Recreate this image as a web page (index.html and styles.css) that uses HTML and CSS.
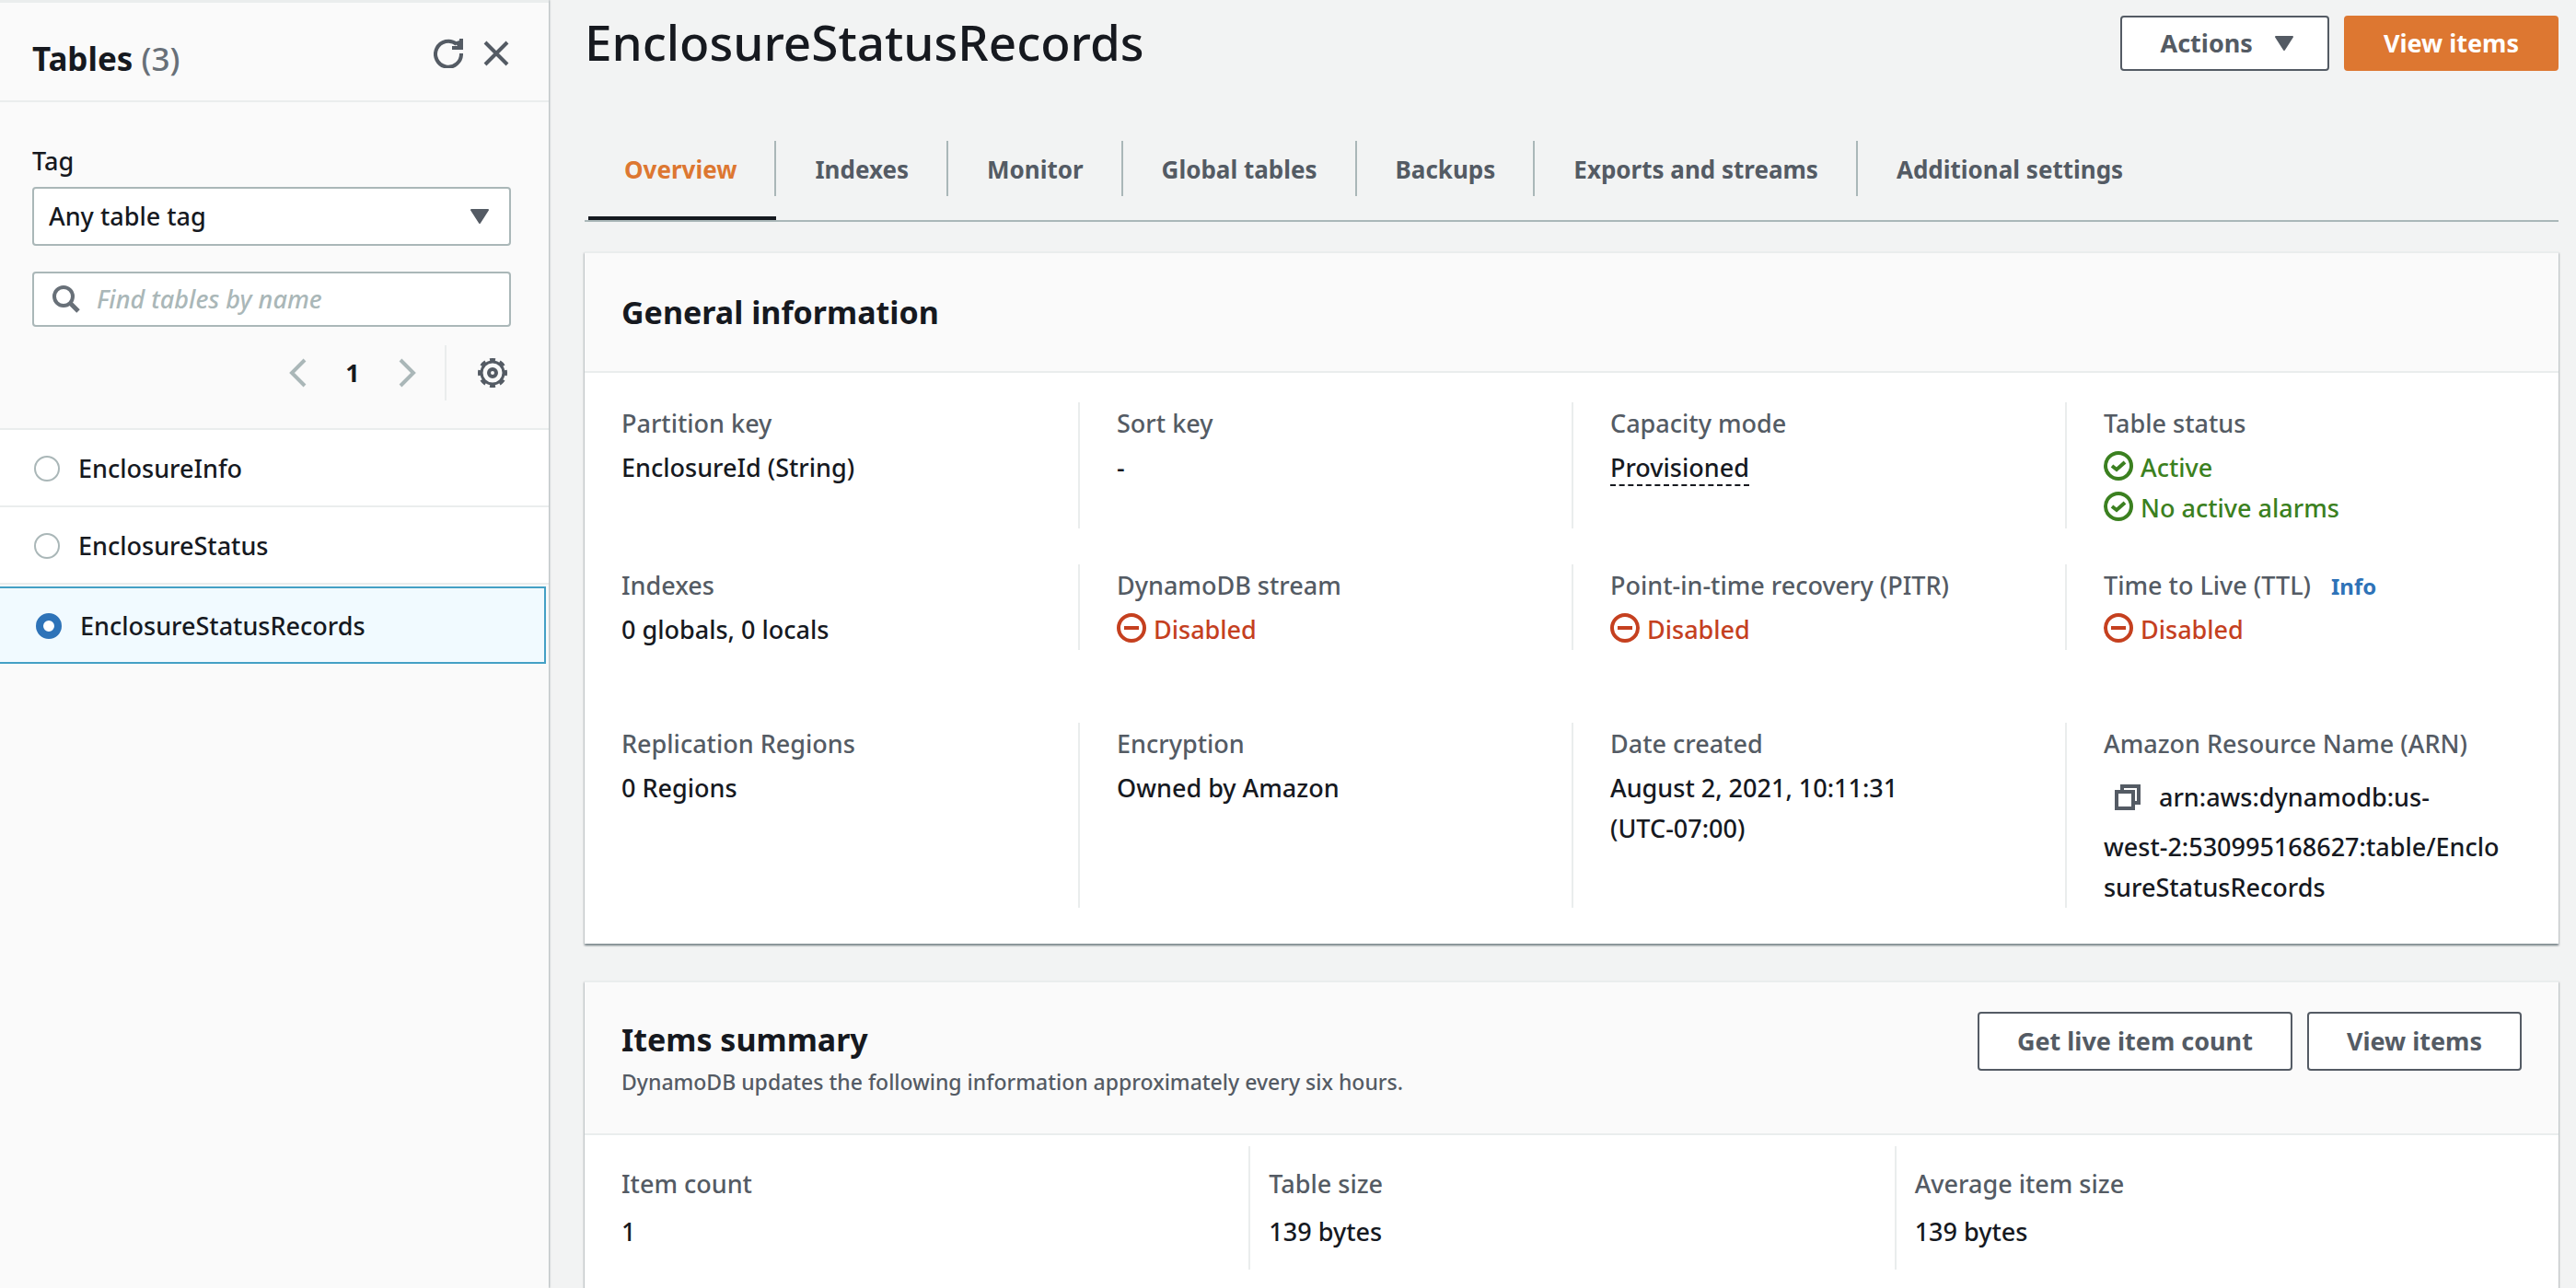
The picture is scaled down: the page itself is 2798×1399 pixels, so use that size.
FILE: index.html
```html
<!DOCTYPE html>
<html lang="en">
<head>
<meta charset="utf-8">
<meta name="viewport" content="width=device-width, initial-scale=1">
<title>EnclosureStatusRecords - DynamoDB</title>
<link rel="stylesheet" href="styles.css">
</head>
<body>
<svg class="sprite" aria-hidden="true">
  <symbol id="caret" viewBox="0 0 20 16"><path d="M1 1h18l-9 14z" fill="currentColor" stroke="currentColor" stroke-width="2" stroke-linejoin="round"/></symbol>
  <symbol id="ok" viewBox="0 0 32 32"><circle cx="16" cy="16" r="14" fill="none" stroke="currentColor" stroke-width="4"/><path d="M9 16l5 4 9-8" fill="none" stroke="currentColor" stroke-width="4"/></symbol>
  <symbol id="off" viewBox="0 0 32 32"><circle cx="16" cy="16" r="14" fill="none" stroke="currentColor" stroke-width="4"/><path d="M8 16h16" stroke="currentColor" stroke-width="4"/></symbol>
</svg>
<div class="layout">
  <aside class="sidebar">
    <header class="sidebar-head">
      <h2 class="sidebar-title">Tables <span class="count">(3)</span></h2>
      <div class="sidebar-tools">
        <button class="icon-btn" type="button" aria-label="Refresh"><svg width="32" height="32" viewBox="0 0 32 32"><path d="M30 16a14 14 0 1 1-5-10" fill="none" stroke="currentColor" stroke-width="4"/><path d="M30 0v10H20" fill="none" stroke="currentColor" stroke-width="4"/><path d="M22 4l6-2v8z" fill="currentColor"/></svg></button>
        <button class="icon-btn" type="button" aria-label="Close"><svg width="28" height="32" viewBox="0 0 28 32"><path d="M2 4l24 24M26 4L2 28" fill="none" stroke="currentColor" stroke-width="4"/></svg></button>
      </div>
    </header>
    <div class="filters">
      <label class="field-label" for="tag">Tag</label>
      <div class="select">
        <select id="tag" class="select-input"><option>Any table tag</option></select>
        <svg class="select-caret" width="20" height="16"><use href="#caret"/></svg>
      </div>
      <div class="search">
        <svg class="search-icon" width="32" height="32" viewBox="0 0 32 32"><circle cx="14" cy="13" r="10" fill="none" stroke="currentColor" stroke-width="4"/><path d="M21 20l9 9" stroke="currentColor" stroke-width="5"/></svg>
        <input class="search-input" type="text" aria-label="Find tables by name" placeholder="Find tables by name">
      </div>
      <div class="pager">
        <button class="page-btn" type="button" aria-label="Previous page"><svg width="20" height="32" viewBox="0 0 20 32"><path d="M18 2L4 16l14 14" fill="none" stroke="currentColor" stroke-width="4"/></svg></button>
        <span class="page-num">1</span>
        <button class="page-btn" type="button" aria-label="Next page"><svg width="20" height="32" viewBox="0 0 20 32"><path d="M2 2l14 14L2 30" fill="none" stroke="currentColor" stroke-width="4"/></svg></button>
        <button class="gear-btn" type="button" aria-label="Preferences"><svg width="32" height="32" viewBox="0 0 32 32" fill="none" stroke="currentColor" stroke-width="4"><circle cx="16" cy="16" r="12" stroke-width="3"/><circle cx="16" cy="16" r="14" pathLength="88" stroke-dasharray="6 5" stroke-dashoffset="3"/><circle cx="16" cy="16" r="4"/></svg></button>
      </div>
    </div>
    <div class="table-list">
      <label class="table-row"><input class="radio" type="radio" name="table">EnclosureInfo</label>
      <label class="table-row"><input class="radio" type="radio" name="table">EnclosureStatus</label>
      <label class="table-row selected"><input class="radio" type="radio" name="table" checked>EnclosureStatusRecords</label>
    </div>
  </aside>

  <main class="main">
    <header class="page-head">
      <h1 class="page-title">EnclosureStatusRecords</h1>
      <div class="actions">
        <button class="btn" type="button">Actions <svg class="btn-caret" width="20" height="16"><use href="#caret"/></svg></button>
        <button class="btn primary" type="button">View items</button>
      </div>
    </header>

    <nav class="tabs">
      <a class="tab active" href="#overview"><span class="tab-text">Overview</span></a>
      <a class="tab" href="#indexes"><span class="tab-text">Indexes</span></a>
      <a class="tab" href="#monitor"><span class="tab-text">Monitor</span></a>
      <a class="tab" href="#global"><span class="tab-text">Global tables</span></a>
      <a class="tab" href="#backups"><span class="tab-text">Backups</span></a>
      <a class="tab" href="#exports"><span class="tab-text">Exports and streams</span></a>
      <a class="tab" href="#settings"><span class="tab-text">Additional settings</span></a>
    </nav>

    <section class="card">
      <header class="card-head">
        <h2 class="card-title">General information</h2>
      </header>
      <div class="info">
        <dl class="info-row">
          <div class="info-cell"><dt>Partition key</dt><dd>EnclosureId (String)</dd></div>
          <div class="info-cell"><dt>Sort key</dt><dd>-</dd></div>
          <div class="info-cell"><dt>Capacity mode</dt><dd><span class="hint">Provisioned</span></dd></div>
          <div class="info-cell"><dt>Table status</dt>
            <dd class="status good"><svg class="status-icon"><use href="#ok"/></svg>Active</dd>
            <dd class="status good"><svg class="status-icon"><use href="#ok"/></svg>No active alarms</dd></div>
        </dl>
        <dl class="info-row">
          <div class="info-cell"><dt>Indexes</dt><dd>0 globals, 0 locals</dd></div>
          <div class="info-cell"><dt>DynamoDB stream</dt><dd class="status bad"><svg class="status-icon"><use href="#off"/></svg>Disabled</dd></div>
          <div class="info-cell"><dt>Point-in-time recovery (PITR)</dt><dd class="status bad"><svg class="status-icon"><use href="#off"/></svg>Disabled</dd></div>
          <div class="info-cell"><dt>Time to Live (TTL)<a class="info-link" href="#ttl">Info</a></dt><dd class="status bad"><svg class="status-icon"><use href="#off"/></svg>Disabled</dd></div>
        </dl>
        <dl class="info-row last">
          <div class="info-cell"><dt>Replication Regions</dt><dd>0 Regions</dd></div>
          <div class="info-cell"><dt>Encryption</dt><dd>Owned by Amazon</dd></div>
          <div class="info-cell"><dt>Date created</dt><dd>August 2, 2021, 10:11:31<br>(UTC-07:00)</dd></div>
          <div class="info-cell"><dt>Amazon Resource Name (ARN)</dt><dd><button class="copy-btn" type="button" aria-label="Copy ARN"><svg width="28" height="28" viewBox="0 0 28 28" fill="none" stroke="currentColor" stroke-width="4"><path d="M2 8h18v18H2z"/><path d="M8 8V2h18v18h-6"/></svg></button>arn:aws:dynamodb:us-<br>west-2:530995168627:table/Enclo<br>sureStatusRecords</dd></div>
        </dl>
      </div>
    </section>

    <section class="card">
      <header class="card-head">
        <div class="card-heading">
          <h2 class="card-title">Items summary</h2>
          <p class="card-desc">DynamoDB updates the following information approximately every six hours.</p>
        </div>
        <div class="actions">
          <button class="btn" type="button">Get live item count</button>
          <button class="btn" type="button">View items</button>
        </div>
      </header>
      <dl class="summary">
        <div class="summary-cell"><dt>Item count</dt><dd>1</dd></div>
        <div class="summary-cell"><dt>Table size</dt><dd>139 bytes</dd></div>
        <div class="summary-cell"><dt>Average item size</dt><dd>139 bytes</dd></div>
      </dl>
    </section>
  </main>
</div>
</body>
</html>
```
FILE: styles.css
```css
:root {
  --ink: #16191f;
  --muted: #545b64;
  --faint: #aab7b8;
  --line: #eaeded;
  --orange: #dd7731;
  --blue: #2e73b8;
}

*, *::before, *::after { box-sizing: border-box; }

body {
  margin: 0;
  background: #f2f3f3;
  color: var(--ink);
  font: 500 27px/44px "Noto Sans", "Open Sans", sans-serif;
}

h1, h2, p, dl, dt, dd { margin: 0; }

button, input, select { font: inherit; color: inherit; }

svg { display: block; }

.sprite { display: none; }

.layout {
  display: flex;
  height: 100vh;
  overflow: hidden;
}

/* Sidebar */
.sidebar {
  flex: 0 0 596px;
  border-top: 3px solid var(--line);
  background: #fafafa;
  box-shadow: 1px 0 2px rgba(0, 28, 36, .3);
}

.sidebar-head {
  display: flex;
  justify-content: space-between;
  height: 108px;
  padding: 35px 43px 0 35px;
  border-bottom: 2px solid var(--line);
}

.sidebar-title { font-size: 35px; line-height: 52px; }

.count { color: #687078; font-weight: 500; }

.sidebar-tools {
  display: flex;
  gap: 22px;
  align-items: flex-start;
  padding-top: 4px;
}

.icon-btn, .page-btn, .gear-btn, .copy-btn {
  padding: 0;
  border: 0;
  background: none;
  color: var(--muted);
}

.filters {
  padding: 40px 41px 30px 35px;
  border-bottom: 2px solid var(--line);
}

.field-label { display: block; margin-bottom: 4px; line-height: 48px; }

.select {
  display: grid;
  align-items: center;
  height: 64px;
}

.select-input, .select-caret { grid-area: 1 / 1; }

.select-input {
  width: 100%;
  height: 64px;
  padding: 0 16px;
  border: 2px solid var(--faint);
  border-radius: 4px;
  background: #fff;
  appearance: none;
}

.select-caret {
  justify-self: end;
  margin-right: 24px;
  color: var(--muted);
  pointer-events: none;
}

.search {
  display: flex;
  align-items: center;
  gap: 18px;
  height: 60px;
  margin-top: 28px;
  padding: 0 18px;
  border: 2px solid var(--faint);
  border-radius: 4px;
  background: #fff;
}

.search-icon { flex: none; color: #687078; }

.search-input {
  flex: 1;
  min-width: 0;
  padding: 0;
  border: 0;
  outline: 0;
  background: none;
}

.search-input::placeholder { color: var(--faint); font-style: italic; opacity: 1; }

.pager {
  display: flex;
  align-items: center;
  justify-content: flex-end;
  height: 60px;
  margin-top: 20px;
}

.page-btn { color: var(--faint); }

.page-num { width: 100px; font-weight: 700; text-align: center; }

.gear-btn {
  height: 60px;
  margin-left: 30px;
  padding: 0 4px 0 34px;
  border-left: 2px solid var(--line);
}

.table-row {
  display: flex;
  align-items: center;
  gap: 20px;
  height: 84px;
  padding: 2px 0 0 37px;
  border-bottom: 2px solid var(--line);
  background: #fff;
}

.table-row.selected {
  margin: 2px 3px 0 0;
  border: 2px solid #44a0c5;
  border-left: 0;
  background: #f1faff;
  padding-left: 39px;
}

.radio {
  width: 28px;
  height: 28px;
  margin: 0;
  border: 2px solid var(--faint);
  border-radius: 50%;
  background: #fff;
  appearance: none;
}

.radio:checked { border: 8px solid var(--blue); }

/* Main column */
.main {
  flex: 1;
  min-width: 0;
  padding: 17px 19px 0 39px;
}

.page-head, .card-head {
  display: flex;
  justify-content: space-between;
  align-items: flex-start;
}

.page-title {
  height: 60px;
  font-size: 53px;
  font-weight: 500;
  line-height: 58px;
}

.actions { display: flex; gap: 16px; }

.btn {
  display: flex;
  align-items: center;
  height: 64px;
  padding: 0 41px;
  border: 2px solid var(--muted);
  border-radius: 4px;
  background: #fff;
  color: var(--muted);
  font-weight: 700;
}

.page-head .btn { height: 60px; }

.btn.primary { border-color: var(--orange); background: var(--orange); color: #fff; }

.btn-caret { margin: 0 -4px 0 24px; }

.tabs {
  display: flex;
  height: 88px;
  margin: 76px 0 32px;
  padding-left: 4px;
  border-bottom: 2px solid var(--faint);
}

.tab {
  color: var(--muted);
  font-size: 26px;
  font-weight: 700;
  text-decoration: none;
}

.tab-text {
  display: block;
  height: 60px;
  padding: 9px 41px 0 42px;
  border-right: 2px solid var(--faint);
}

.tab:first-child .tab-text { padding-left: 39px; }

.tab:last-child .tab-text { border-right: 0; }

.tab.active { border-bottom: 4px solid var(--ink); color: var(--orange); }

.card {
  margin-bottom: 40px;
  border-top: 2px solid var(--line);
  background: #fff;
  box-shadow: 0 2px 2px rgba(0, 28, 36, .3), 1px 2px 2px rgba(0, 28, 36, .15), -1px 2px 2px rgba(0, 28, 36, .15);
}

.card-head {
  padding: 32px 40px;
  border-bottom: 2px solid var(--line);
  background: #fafafa;
}

.card-title { font-size: 34px; line-height: 64px; }

.card-heading .card-title { line-height: 60px; }

.card-desc { padding-bottom: 8px; font-size: 23px; line-height: 32px; }

.card-desc, dt { color: var(--muted); }

.info { padding: 32px 0 39px; }

.info-row {
  display: grid;
  grid-template-columns: repeat(4, 1fr);
  margin-bottom: 39px;
}

.info-row.last { margin: 79px 0 0; }

.info-cell { padding: 1px 40px 0; }

.info-cell + .info-cell { border-left: 2px solid var(--line); }

.info-cell dt { margin-bottom: 4px; }

.hint { border-bottom: 2px dashed var(--ink); }

.status { display: flex; gap: 8px; }

.status-icon { width: 32px; height: 32px; margin-top: 4px; }

.good { color: #3b8020; }

.bad { color: #c5401f; }

.info-link {
  margin-left: 22px;
  color: var(--blue);
  font-size: 24px;
  font-weight: 700;
  line-height: 24px;
  text-decoration: none;
}

.copy-btn {
  display: inline-flex;
  align-items: center;
  height: 64px;
  padding: 0 20px 0 12px;
  vertical-align: -4px;
}

.summary {
  display: grid;
  grid-template-columns: repeat(3, 1fr);
  padding: 12px 20px 20px;
}

.summary-cell { padding: 19px 20px 19px; }

.summary-cell + .summary-cell { border-left: 2px solid var(--line); }

.summary-cell dt { margin-bottom: 8px; }
```
